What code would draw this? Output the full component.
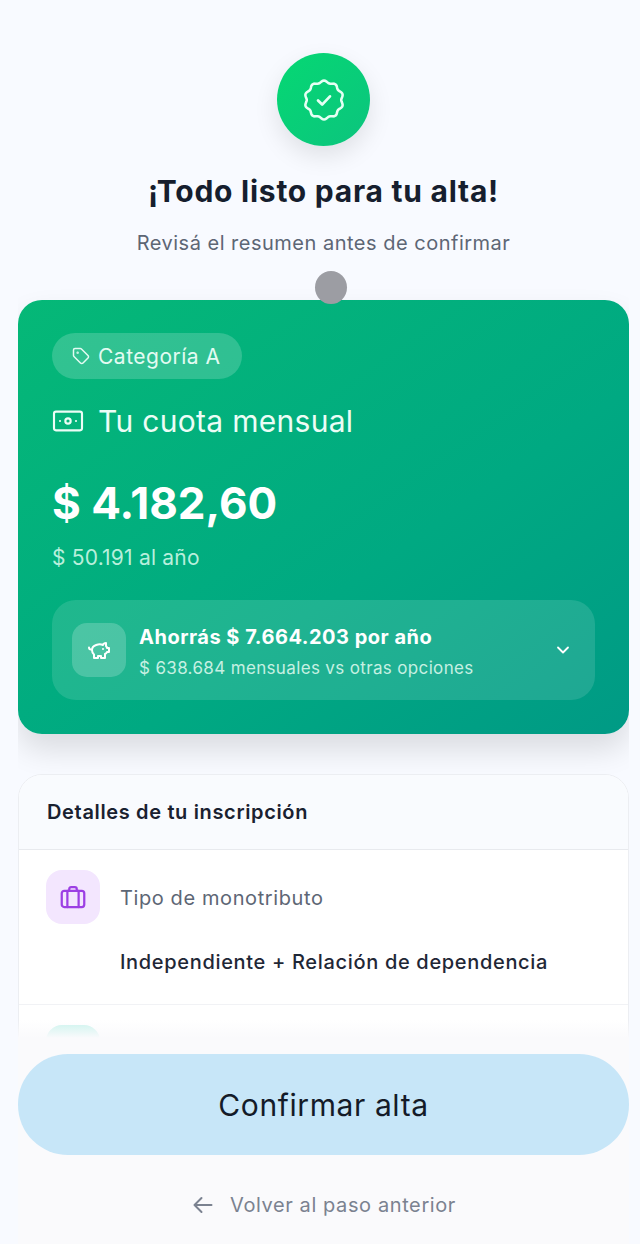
<script>
  // scalloped seal outline for the success badge
  const seal = Array.from({ length: 121 }, (_, i) => {
    const a = (i / 120) * Math.PI * 2;
    const r = 20 + 1.2 * Math.cos(a * 10);
    return `${(24 + r * Math.sin(a)).toFixed(2)} ${(24 - r * Math.cos(a)).toFixed(2)}`;
  }).join(" L");
</script>

<div class="page">
  <div class="panel">
    <header class="head">
      <div class="badge">
        <svg width="44" height="44" viewBox="0 0 48 48" fill="none" stroke="currentColor" stroke-width="2.8" stroke-linecap="round" stroke-linejoin="round">
          <path d={"M" + seal + "Z"} />
          <path d="M17.5 24.5l4.5 4.5 8.5-9" stroke-width="3" />
        </svg>
      </div>
      <h1>¡Todo listo para tu alta!</h1>
      <p>Revisá el resumen antes de confirmar</p>
    </header>

    <section class="fee">
      <span class="chip">
        <svg width="18" height="18" viewBox="0 0 24 24" fill="none" stroke="currentColor" stroke-width="2" stroke-linecap="round" stroke-linejoin="round">
          <path d="M12.6 2.6A2 2 0 0 0 11.2 2H4a2 2 0 0 0-2 2v7.2a2 2 0 0 0 .6 1.4l8.7 8.7a2.4 2.4 0 0 0 3.4 0l6.6-6.6a2.4 2.4 0 0 0 0-3.4z" />
          <circle cx="7.5" cy="7.5" r=".6" fill="currentColor" />
        </svg>
        Categoría A
      </span>
      <div class="fee-title">
        <svg width="32" height="32" viewBox="0 0 24 24" fill="none" stroke="currentColor" stroke-width="1.6" stroke-linecap="round" stroke-linejoin="round">
          <rect x="1.5" y="5" width="21" height="14" rx="1.5" />
          <circle cx="12" cy="12" r="2" />
          <path d="M6 12h.01M18 12h.01" />
        </svg>
        <span>Tu cuota mensual</span>
      </div>
      <div class="amount">$ 4.182,60</div>
      <div class="yearly">$ 50.191 al año</div>
      <div class="saving">
        <span class="pig">
          <svg width="24" height="24" viewBox="0 0 24 24" fill="none" stroke="currentColor" stroke-width="2" stroke-linecap="round" stroke-linejoin="round">
            <path d="M19 5c-1.5 0-2.8 1.4-3 2-3.5-1.5-11-.3-11 5 0 1.8 0 3 2 4.5V20h4v-2h3v2h4v-4c1-.5 1.7-1 2-2h2v-4h-2c0-1-.5-1.5-1-2V5z" />
            <path d="M2 9.5c0 1.2 1 2 2 2" />
            <path d="M16 11h.01" />
          </svg>
        </span>
        <div class="saving-text">
          <strong>Ahorrás $ 7.664.203 por año</strong>
          <small>$ 638.684 mensuales vs otras opciones</small>
        </div>
        <svg class="chev" width="20" height="20" viewBox="0 0 24 24" fill="none" stroke="currentColor" stroke-width="2.2" stroke-linecap="round" stroke-linejoin="round">
          <path d="m6 9 6 6 6-6" />
        </svg>
      </div>
    </section>

    <section class="details">
      <h2>Detalles de tu inscripción</h2>
      <div class="row">
        <span class="ico purple">
          <svg width="30" height="30" viewBox="0 0 24 24" fill="none" stroke="currentColor" stroke-width="1.8" stroke-linecap="round" stroke-linejoin="round">
            <rect x="3" y="7" width="18" height="13" rx="2" />
            <path d="M7.5 20V7M16.500 20V7M9 7V5.5A1.5 1.5 0 0 1 10.5 4h3A1.5 1.5 0 0 1 15 5.5V7" />
          </svg>
        </span>
        <div class="row-body">
          <div class="label">Tipo de monotributo</div>
          <div class="value">Independiente + Relación de dependencia</div>
        </div>
      </div>
      <div class="row second">
        <span class="ico teal"></span>
      </div>
    </section>

    <div class="actions">
      <button class="confirm">Confirmar alta</button>
      <button class="back">
        <svg width="24" height="24" viewBox="0 0 24 24" fill="none" stroke="currentColor" stroke-width="2" stroke-linecap="round" stroke-linejoin="round">
          <path d="M20.5 12h-17M10.500 19l-7-7 7-7" />
        </svg>
        Volver al paso anterior
      </button>
    </div>
  </div>
  <span class="touch"></span>
</div>

<style>
  :global(body) {
    margin: 0;
    background: #f8faff;
  }

  .page {
    position: relative;
    height: 1244px;
    overflow: hidden;
    padding: 0 11px 0 18px;
    box-sizing: border-box;
    font-family: Inter, "Noto Sans", sans-serif;
    color: #1a2130;
  }

  .panel {
    position: relative;
    height: 100%;
    overflow: hidden;
  }

  .head {
    display: flex;
    flex-direction: column;
    align-items: center;
    padding-top: 53px;
    height: 258px;
    box-sizing: border-box;
  }

  .badge {
    flex: none;
    width: 93px;
    height: 93px;
    border-radius: 50%;
    background: linear-gradient(135deg, #05d873, #0cc47e);
    color: #e6fff4;
    display: flex;
    align-items: center;
    justify-content: center;
    box-shadow: 0 10px 24px rgba(0, 0, 0, 0.1);
  }

  h1 {
    margin: 27px 0 0;
    font-size: 30px;
    line-height: 36px;
    letter-spacing: 0.75px;
    font-weight: 700;
    color: #161e2e;
  }

  .head p {
    margin: 19px 0 0;
    font-size: 20px;
    line-height: 30px;
    letter-spacing: 0.5px;
    color: #5d6675;
  }

  .fee {
    margin-top: 42px;
    height: 434px;
    box-sizing: border-box;
    padding: 33px 34px;
    border-radius: 24px;
    color: #fff;
    background: linear-gradient(145deg, #05b877 0%, #00a982 60%, #009a85 100%);
    box-shadow: 0 16px 30px rgba(0, 0, 0, 0.12);
  }

  .chip {
    display: inline-flex;
    align-items: center;
    gap: 8px;
    height: 46px;
    padding: 0 21px 0 20px;
    border-radius: 23px;
    font-size: 21px;
    letter-spacing: 0.5px;
    color: #e3fbf2;
    background: rgba(255, 255, 255, 0.18);
  }

  .fee-title {
    display: flex;
    align-items: center;
    gap: 14px;
    margin-top: 18px;
    font-size: 30px;
    line-height: 48px;
    letter-spacing: 0.3px;
    color: #ecfdf6;
  }

  .amount {
    margin-top: 29px;
    font-size: 44px;
    line-height: 58px;
    font-weight: 700;
  }

  .yearly {
    margin-top: 13px;
    font-size: 21px;
    line-height: 26px;
    letter-spacing: 0.2px;
    color: #b8efdc;
  }

  .saving {
    display: flex;
    align-items: center;
    gap: 13px;
    margin-top: 29px;
    height: 100px;
    padding: 0 22px 0 20px;
    border-radius: 24px;
    background: rgba(255, 255, 255, 0.12);
  }

  .pig {
    width: 54px;
    height: 54px;
    border-radius: 15px;
    background: rgba(255, 255, 255, 0.2);
    display: flex;
    align-items: center;
    justify-content: center;
  }

  .saving-text {
    flex: 1;
    display: flex;
    flex-direction: column;
    gap: 7px;
    margin-top: 3px;
  }

  .saving-text strong {
    font-size: 20px;
    line-height: 26px;
    letter-spacing: 0.5px;
    font-weight: 700;
  }

  .saving-text small {
    font-size: 17px;
    line-height: 22px;
    letter-spacing: 0.35px;
    color: #c6f0e2;
  }

  .details {
    margin-top: 40px;
    background: #fff;
    border: 1px solid #eceef2;
    border-radius: 24px;
    overflow: hidden;
  }

  h2 {
    margin: 0;
    padding: 0 28px;
    height: 74px;
    display: flex;
    align-items: center;
    font-size: 20px;
    letter-spacing: 0.65px;
    font-weight: 600;
    color: #1a2130;
    background: #f9fbfe;
    border-bottom: 1px solid #e8eaee;
  }

  .row {
    display: flex;
    gap: 20px;
    padding: 20px 27px;
    border-bottom: 1px solid #f1f2f5;
  }

  .row.second {
    border-bottom: 0;
    height: 120px;
  }

  .ico {
    flex: none;
    width: 54px;
    height: 54px;
    border-radius: 16px;
    display: flex;
    align-items: center;
    justify-content: center;
  }

  .purple {
    background: #f3e6fe;
    color: #9c3fe4;
  }

  .teal {
    background: #c8f3ec;
  }

  .label {
    margin-top: 14px;
    font-size: 20px;
    line-height: 28px;
    letter-spacing: 0.6px;
    color: #5d6675;
  }

  .value {
    margin-top: 36px;
    margin-bottom: 8px;
    font-size: 20px;
    line-height: 28px;
    letter-spacing: 0.67px;
    font-weight: 500;
    color: #1f2736;
  }

  .actions {
    position: absolute;
    left: 0;
    right: 0;
    bottom: 0;
    height: 224px;
    padding-top: 34px;
    box-sizing: border-box;
    display: flex;
    flex-direction: column;
    align-items: stretch;
    background: linear-gradient(to bottom, rgba(250, 250, 252, 0) 0, #fafafc 18px);
  }

  .confirm {
    height: 101px;
    flex: none;
    border: 0;
    border-radius: 50px;
    background: #c7e6f8;
    color: #141b28;
    font: inherit;
    font-size: 30px;
    letter-spacing: 0.6px;
    font-weight: 400;
  }

  .back {
    align-self: center;
    display: flex;
    align-items: center;
    gap: 15px;
    margin-top: 35px;
    border: 0;
    padding: 0;
    background: none;
    font: inherit;
    font-size: 20px;
    line-height: 30px;
    letter-spacing: 0.6px;
    color: #7b8290;
  }

  .touch {
    position: absolute;
    left: 315px;
    top: 271px;
    width: 32px;
    height: 33px;
    border-radius: 50%;
    background: #9c9da3;
  }
</style>
